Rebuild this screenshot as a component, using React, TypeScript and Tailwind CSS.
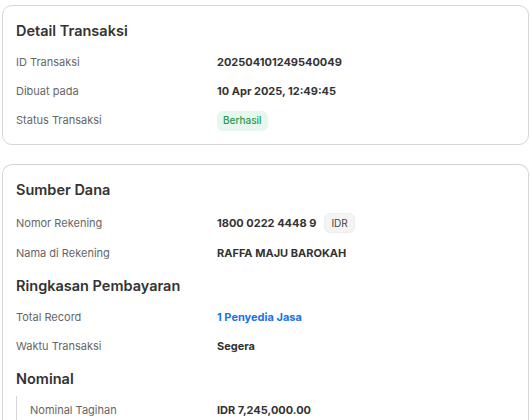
import React from 'react'

type Row = {
  label: string
  value: React.ReactNode
  tall?: boolean
}

function SectionTitle({ children }: { children: React.ReactNode }) {
  return (
    <h2 className="my-[7px] text-[14.5px] leading-[21px] font-semibold text-[#333333]">
      {children}
    </h2>
  )
}

function InfoRow({ label, value, tall }: Row) {
  return (
    <div className={`flex items-center ${tall ? 'h-[32px]' : 'h-[29px]'}`}>
      <div className="w-[201px] shrink-0 text-[11px] text-[#666666]">{label}</div>
      <div className="text-[11px] font-bold text-[#333333]">{value}</div>
    </div>
  )
}

export default function App() {
  return (
    <div
      className="h-screen overflow-hidden bg-white px-[2px] pt-[5px]"
      style={{ fontFamily: 'Inter, "Noto Sans", sans-serif' }}
    >
      {/* Detail Transaksi */}
      <div className="h-[140px] rounded-[10px] border border-[#d6d6d6] px-[13px] pt-[7px]">
        <SectionTitle>Detail Transaksi</SectionTitle>
        <InfoRow label="ID Transaksi" value="202504101249540049" />
        <InfoRow label="Dibuat pada" value="10 Apr 2025, 12:49:45" />
        <InfoRow
          label="Status Transaksi"
          value={
            <span className="inline-flex h-[20px] items-center rounded-md bg-[#e7f7ed] px-[6px] text-[10px] font-medium text-[#1f9a4f]">
              Berhasil
            </span>
          }
        />
      </div>

      {/* Sumber Dana + Ringkasan */}
      <div className="mt-[19px] rounded-t-[10px] border border-b-0 border-[#d6d6d6] px-[13px] pt-[7px] pb-4">
        <SectionTitle>Sumber Dana</SectionTitle>
        <InfoRow
          label="Nomor Rekening"
          tall
          value={
            <span className="flex items-center gap-[8px]">
              1800 0222 4448 9
              <span className="inline-flex h-[20px] items-center rounded-md border border-[#ececec] bg-[#f4f4f4] px-[6px] text-[10px] font-normal text-[#444444]">
                IDR
              </span>
            </span>
          }
        />
        <InfoRow label="Nama di Rekening" value="RAFFA MAJU BAROKAH" />

        <SectionTitle>Ringkasan Pembayaran</SectionTitle>
        <InfoRow label="Total Record" value={<span className="text-[#1a73e8]">1 Penyedia Jasa</span>} />
        <InfoRow label="Waktu Transaksi" value="Segera" />

        <SectionTitle>Nominal</SectionTitle>
        <div className="flex h-[29px] items-center border-l border-[#d6d6d6] pl-[13px]">
          <div className="w-[187px] shrink-0 text-[11px] text-[#666666]">Nominal Tagihan</div>
          <div className="text-[11px] font-bold text-[#333333]">IDR 7,245,000.00</div>
        </div>
      </div>
    </div>
  )
}
